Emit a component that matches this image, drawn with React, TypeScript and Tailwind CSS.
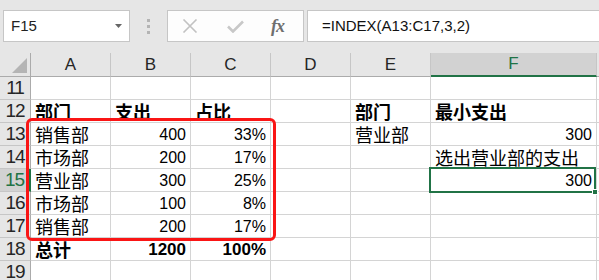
import React from 'react';

// Excel-like sheet: formula bar + grid, F15 selected, red frame around A13:C17

type CellDef = { t?: string; right?: boolean; bold?: boolean; num?: boolean };

const COLS = ['A', 'B', 'C', 'D', 'E', 'F', 'G'];
const COL_W = ['w-[80px]', 'w-[80px]', 'w-[80px]', 'w-[80px]', 'w-[80px]', 'w-[166px]', 'w-[80px]'];

const cjk = "font-['Noto_Sans_CJK_SC',sans-serif] text-[18px] leading-[22px]";
const latin = "font-['Liberation_Sans','Noto_Sans_CJK_SC',sans-serif] text-[16px] leading-[20px]";
const latinBold = "font-['Liberation_Sans','Noto_Sans_CJK_SC',sans-serif] text-[17px] leading-[20px]";

const rows: { n: number; cells: CellDef[] }[] = [
  { n: 11, cells: [] },
  {
    n: 12,
    cells: [
      { t: '部门', bold: true },
      { t: '支出', bold: true },
      { t: '占比', bold: true },
      {},
      { t: '部门', bold: true },
      { t: '最小支出', bold: true },
    ],
  },
  {
    n: 13,
    cells: [
      { t: '销售部' },
      { t: '400', right: true, num: true },
      { t: '33%', right: true, num: true },
      {},
      { t: '营业部' },
      { t: '300', right: true, num: true },
    ],
  },
  {
    n: 14,
    cells: [
      { t: '市场部' },
      { t: '200', right: true, num: true },
      { t: '17%', right: true, num: true },
      {},
      {},
      { t: '选出营业部的支出' },
    ],
  },
  {
    n: 15,
    cells: [
      { t: '营业部' },
      { t: '300', right: true, num: true },
      { t: '25%', right: true, num: true },
      {},
      {},
      { t: '300', right: true, num: true },
    ],
  },
  {
    n: 16,
    cells: [
      { t: '市场部' },
      { t: '100', right: true, num: true },
      { t: '8%', right: true, num: true },
    ],
  },
  {
    n: 17,
    cells: [
      { t: '销售部' },
      { t: '200', right: true, num: true },
      { t: '17%', right: true, num: true },
    ],
  },
  {
    n: 18,
    cells: [
      { t: '总计', bold: true },
      { t: '1200', right: true, num: true, bold: true },
      { t: '100%', right: true, num: true, bold: true },
    ],
  },
  { n: 19, cells: [] },
];

const FormulaBar: React.FC = () => (
  <div className="h-[53px] bg-[#e6e6e6] pt-[10px] pl-[3px] flex items-start">
    <div className="w-[127px] h-[32px] shrink-0 bg-white border border-[#c6c6c6] flex items-center justify-between pl-[7px] pr-[7px]">
      <span className="font-['Liberation_Sans',sans-serif] text-[15px] text-[#222]">F15</span>
      <svg width="7" height="4" viewBox="0 0 7 4">
        <path d="M0 0 L7 0 L3.5 4 Z" fill="#666" />
      </svg>
    </div>
    <div className="w-[37px] h-[32px] shrink-0 flex flex-col items-center justify-center gap-[3px]">
      <span className="w-[3px] h-[3px] bg-[#b4b4b4]" />
      <span className="w-[3px] h-[3px] bg-[#b4b4b4]" />
      <span className="w-[3px] h-[3px] bg-[#b4b4b4]" />
    </div>
    <div className="w-[137px] h-[32px] shrink-0 bg-[#fdfdfd] border border-[#c6c6c6] flex items-center">
      <svg className="ml-[14px]" width="16" height="14" viewBox="0 0 16 14">
        <path d="M1.5 0.5 L14.5 13.5 M14.5 0.5 L1.5 13.5" stroke="#c2c2c2" strokeWidth="1.6" />
      </svg>
      <svg className="ml-[29px]" width="17" height="13" viewBox="0 0 17 13">
        <path d="M1 6.5 L6 11.5 L16 1.5" stroke="#c8c8c8" strokeWidth="2.6" fill="none" />
      </svg>
      <span className="ml-[27px] font-['Liberation_Serif',serif] italic font-bold text-[18px] leading-none text-[#6f6f6f] tracking-[-1px]">
        fx
      </span>
    </div>
    <div className="ml-[3px] w-[320px] h-[32px] shrink-0 bg-white border border-[#c6c6c6] flex items-center pl-[14px]">
      <span className="font-['Liberation_Sans',sans-serif] text-[15px] text-[#111]">=INDEX(A13:C17,3,2)</span>
    </div>
  </div>
);

const Cell: React.FC<{ c?: CellDef; w: string }> = ({ c, w }) => (
  <div
    className={`${w} h-[23px] shrink-0 border-r border-b border-[#d4d4d4] bg-white flex items-end overflow-visible whitespace-nowrap px-[4px] ${
      c?.right ? 'justify-end' : 'justify-start'
    }`}
  >
    {c?.t && (
      <span
        className={`block ${c.num ? (c.bold ? latinBold : latin) : cjk} ${c.bold ? 'font-bold' : ''} text-black`}
      >
        {c.t}
      </span>
    )}
  </div>
);

export default function App() {
  return (
    <div className="relative w-[599px] h-[280px] overflow-hidden bg-white">
      <FormulaBar />
      {/* column headers */}
      <div className="flex h-[24px] bg-[#e6e6e6]">
        <div className="w-[31px] h-[24px] shrink-0 border-r border-b border-[#ababab] flex items-end justify-end pr-[3px] pb-[3px]">
          <svg width="15" height="15" viewBox="0 0 15 15">
            <path d="M15 0 L15 15 L0 15 Z" fill="#b4b4b4" />
          </svg>
        </div>
        {COLS.map((l, i) => (
          <div
            key={l}
            className={`${COL_W[i]} h-[24px] shrink-0 border-r border-[#c6c6c6] flex items-center justify-center font-['Liberation_Sans',sans-serif] text-[17px] ${
              l === 'F'
                ? 'bg-[#d2d2d2] text-[#217346] border-b-2 border-b-[#217346]'
                : 'text-[#262626] border-b border-b-[#ababab]'
            }`}
          >
            {l === 'G' ? '' : l}
          </div>
        ))}
      </div>
      {/* rows */}
      {rows.map((r) => (
        <div key={r.n} className="flex">
          <div
            className={`w-[31px] h-[23px] shrink-0 border-b border-[#c6c6c6] flex items-center justify-center font-['Liberation_Sans',sans-serif] text-[19px] tracking-[-1px] ${
              r.n === 15
                ? 'bg-[#d2d2d2] text-[#217346] border-r-2 border-r-[#217346]'
                : 'bg-[#e6e6e6] text-[#262626] border-r border-r-[#ababab]'
            }`}
          >
            {r.n}
          </div>
          {COL_W.map((w, i) => (
            <Cell key={i} w={w} c={r.cells[i]} />
          ))}
        </div>
      ))}
      {/* red frame around A13:C17 */}
      <div className="absolute left-[26px] top-[118px] w-[250px] h-[123px] border-[3px] border-[#fa1515] rounded-[6px] pointer-events-none" />
      {/* selection F15 */}
      <div className="absolute left-[429px] top-[167px] w-[167px] h-[26px] border-2 border-[#217346] pointer-events-none" />
      <div className="absolute left-[592px] top-[189px] w-[6px] h-[6px] bg-[#217346] border border-white" />
    </div>
  );
}
